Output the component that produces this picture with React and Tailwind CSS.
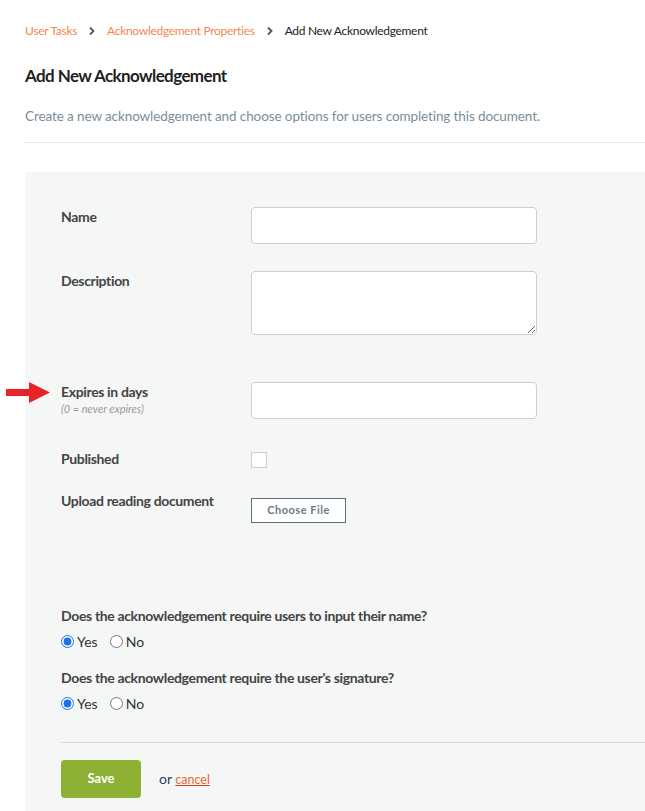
import React from 'react';

const font = { fontFamily: 'Lato, "Noto Sans", sans-serif' };

const labelCls = 'text-[14px] font-bold leading-[20px] tracking-[-0.35px]';

const Chevron = () => (
    <svg className="mx-[11px] h-[10px] w-[8px] text-[#555]" viewBox="0 0 8 10" fill="none">
        <path d="M2 1.5 L5.5 5 L2 8.5" stroke="currentColor" strokeWidth="1.8" />
    </svg>
);

const RadioGroup = ({ name }) => (
    <div className="mt-[5px] flex items-center text-[14px] text-[#333]">
        <label className="flex items-center">
            <input type="radio" name={name} defaultChecked className="m-0 h-[13px] w-[13px] accent-[#1a73e8]" />
            <span className="ml-[3px]">Yes</span>
        </label>
        <label className="ml-[12px] flex items-center">
            <input type="radio" name={name} className="m-0 h-[13px] w-[13px]" />
            <span className="ml-[3px]">No</span>
        </label>
    </div>
);

const App = () => {
    return (
        <div className="relative min-h-[811px] w-[645px] overflow-hidden bg-white" style={font}>
            {/* breadcrumb */}
            <div className="flex items-center pl-[25px] pt-[22px] text-[12px] leading-[18px] tracking-[-0.3px]">
                <span className="text-[#f2874f]">User Tasks</span>
                <Chevron />
                <span className="text-[#f2874f]">Acknowledgement Properties</span>
                <Chevron />
                <span className="text-[#222]">Add New Acknowledgement</span>
            </div>

            <h1 className="pl-[25px] pt-[24px] text-[17px] font-bold leading-[24px] tracking-[-0.6px] text-[#1f1f1f]">
                Add New Acknowledgement
            </h1>

            <p className="pl-[25px] pt-[18px] text-[13.5px] leading-[20px] tracking-[-0.1px] text-[#7b8d97]">
                Create a new acknowledgement and choose options for users completing this document.
            </p>

            <div className="ml-[25px] mt-[16px] h-px bg-[#dceaf0]" />

            {/* form panel */}
            <div className="ml-[25px] mt-[29px] bg-[#f5f6f6] pb-[20px] pl-[36px] pt-[35px] text-[#444]">
                <div className="flex">
                    <div className={`w-[190px] ${labelCls}`}>Name</div>
                    <input className="h-[37px] w-[286px] rounded-[4px] border border-[#cfcfcf] bg-white" />
                </div>

                <div className="mt-[27px] flex">
                    <div className={`w-[190px] ${labelCls}`}>Description</div>
                    <textarea className="block h-[64px] w-[286px] rounded-[4px] border border-[#cfcfcf] bg-white" />
                </div>

                <div className="mt-[47px] flex">
                    <div className="w-[190px]">
                        <div className={labelCls}>Expires in days</div>
                        <div className="text-[11px] italic leading-[14px] text-[#9a9a9a]">(0 = never expires)</div>
                    </div>
                    <input className="h-[37px] w-[286px] rounded-[4px] border border-[#cfcfcf] bg-white" />
                </div>

                <div className="mt-[30px] flex">
                    <div className={`w-[190px] ${labelCls}`}>Published</div>
                    <div className="mt-[3px] h-[16px] w-[16px] border border-[#cfcfcf] bg-white" />
                </div>

                <div className="mt-[22px] flex">
                    <div className={`w-[190px] ${labelCls}`}>Upload reading document</div>
                    <button className="mt-[7px] h-[25px] w-[95px] border border-[#5f6f78] bg-white text-[11px] font-bold tracking-[0.5px] text-[#6b7a84]">
                        Choose File
                    </button>
                </div>

                <div className={`mt-[83px] ${labelCls}`}>
                    Does the acknowledgement require users to input their name?
                </div>
                <RadioGroup name="requireName" />

                <div className={`mt-[16px] ${labelCls}`}>
                    Does the acknowledgement require the user's signature?
                </div>
                <RadioGroup name="requireSignature" />

                <div className="mt-[28px] h-px bg-[#d9d9d9]" />

                <div className="mt-[17px] flex items-center">
                    <button className="h-[38px] w-[80px] rounded-[4px] bg-[#8cb133] text-[13px] font-bold text-white">
                        Save
                    </button>
                    <span className="ml-[18px] text-[14px] text-[#2d3e50]">
                        or{' '}
                        <span className="text-[12.5px] text-[#e8682e] underline decoration-[#d93a1a]">cancel</span>
                    </span>
                </div>
            </div>

            {/* annotation arrow */}
            <svg className="absolute left-[6px] top-[382px] h-[21px] w-[45px]" viewBox="0 0 45 21">
                <polygon points="0,7 23,7 23,0 44,10.5 23,21 23,14 0,14" fill="#e8242a" />
            </svg>
        </div>
    );
};

export default App;
